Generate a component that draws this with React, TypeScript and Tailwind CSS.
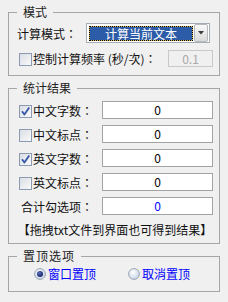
import React from "react";

function Checkbox({ checked }: { checked?: boolean }) {
  return (
    <svg width="13" height="13" viewBox="0 0 13 13" className="shrink-0">
      <defs>
        <linearGradient id="cbg" x1="0" y1="0" x2="1" y2="1">
          <stop offset="0" stopColor="#d8dce2" />
          <stop offset="1" stopColor="#fbfbfb" />
        </linearGradient>
      </defs>
      <rect x="0.5" y="0.5" width="12" height="12" fill="url(#cbg)" stroke="#8c9bb3" />
      {checked && (
        <path d="M3 6.2 L5.4 9.6 L10.2 2.6" fill="none" stroke="#3557a6" strokeWidth="1.8" strokeLinejoin="round" />
      )}
    </svg>
  );
}

function Radio({ checked }: { checked?: boolean }) {
  return (
    <svg width="12" height="12" viewBox="0 0 12 12" className="shrink-0">
      <defs>
        <radialGradient id="rbg" cx="0.4" cy="0.35" r="0.7">
          <stop offset="0" stopColor="#ffffff" />
          <stop offset="1" stopColor="#c3d2e4" />
        </radialGradient>
        <radialGradient id="rdot" cx="0.4" cy="0.35" r="0.7">
          <stop offset="0" stopColor="#5a6fc0" />
          <stop offset="1" stopColor="#101c5a" />
        </radialGradient>
      </defs>
      <circle cx="6" cy="6" r="5.4" fill="url(#rbg)" stroke="#9aa4b4" strokeWidth="1" />
      {checked && <circle cx="6" cy="6" r="3" fill="url(#rdot)" />}
    </svg>
  );
}

function ResultRow({
  label,
  checked,
  value,
  box = true,
  blue,
}: {
  label: string;
  checked?: boolean;
  value: string;
  box?: boolean;
  blue?: boolean;
}) {
  return (
    <div className="flex h-[18px] items-center">
      {box ? (
        <div className="mt-[2px] flex items-center">
          <div className="ml-[2px]">
            <Checkbox checked={checked} />
          </div>
          <span className="ml-[1px] leading-[14px]">{label}</span>
        </div>
      ) : (
        <span className="ml-[4px] mt-[2px] leading-[14px]">{label}</span>
      )}
      <div
        className={`ml-auto flex h-[18px] w-[111px] items-center justify-center border border-[#a3a3a3] bg-white leading-[14px] ${
          blue ? "text-[#0000ff]" : "text-black"
        }`}
      >
        {value}
      </div>
    </div>
  );
}

export default function App() {
  return (
    <div className="h-[302px] w-[228px] overflow-hidden bg-[#f0f0f0] pt-[5px] font-['Noto_Sans_CJK_TC','Noto_Sans_CJK_SC',sans-serif] text-[12px] text-[#111] [text-spacing-trim:space-all]">
      {/* 模式 */}
      <fieldset className="mx-[8px] border border-[#a6a6a6] pb-[8px] pl-[8px] pr-[6px] pt-[4px]">
        <legend className="px-[6px] leading-[14px] text-[#222]">模式</legend>
        <div className="flex h-[20px] items-center">
          <span className="mt-[1px] w-[69px] leading-[14px]">计算模式：</span>
          <div className="flex h-[20px] w-[124px] items-start border border-[#a5acb5] bg-white pl-[2px] pr-[1px]">
            <div className="mt-[2px] h-[15px] w-[104px] bg-[#d9b85c]">
              <div className="flex h-[15px] w-[104px] items-center justify-center border border-dotted border-black bg-[#2c5ba8] bg-clip-padding leading-[13px] text-white">
                计算当前文本
              </div>
            </div>
            <div className="ml-[1px] flex h-[18px] w-[14px] items-center justify-center rounded-[2px] border border-[#b5b8bd] bg-gradient-to-b from-[#fafafa] to-[#dadada]">
              <svg width="6" height="4" viewBox="0 0 6 4">
                <path d="M0 0 H6 L3 3.5 Z" fill="#3a3a3a" />
              </svg>
            </div>
          </div>
        </div>
        <div className="mt-[7px] flex h-[17px] items-center">
          <div className="ml-[2px] mt-[1px]">
            <Checkbox />
          </div>
          <span className="ml-[1px] mt-[1px] leading-[14px]">控制计算频率 (秒/次)：</span>
          <div className="ml-auto flex h-[17px] w-[45px] items-center justify-center border border-[#c9c9c9] leading-[14px] text-[#a8a8a8]">
            0.1
          </div>
        </div>
      </fieldset>

      {/* 统计结果 */}
      <fieldset className="mx-[8px] mt-[5px] border border-[#a6a6a6] pb-[6px] pl-[8px] pr-[6px] pt-[6px]">
        <legend className="px-[6px] leading-[14px] text-[#222]">统计结果</legend>
        <div className="flex flex-col gap-[6px]">
          <ResultRow label="中文字数：" checked value="0" />
          <ResultRow label="中文标点：" value="0" />
          <ResultRow label="英文字数：" checked value="0" />
          <ResultRow label="英文标点：" value="0" />
          <ResultRow label="合计勾选项：" box={false} value="0" blue />
        </div>
        <div className="mt-[8px] text-center leading-[14px]">【拖拽txt文件到界面也可得到结果】</div>
      </fieldset>

      {/* 置顶选项 */}
      <fieldset className="mx-[8px] mt-[5px] border border-[#a6a6a6] pb-[9px] pl-[8px] pr-[6px] pt-[3px]">
        <legend className="px-[6px] leading-[14px] tracking-[1px] text-[#222]">置顶选项</legend>
        <div className="flex h-[16px] items-center text-[#0000ff]">
          <div className="ml-[17px] flex w-[94px] items-center">
            <Radio checked />
            <span className="ml-[2px] leading-[14px]">窗口置顶</span>
          </div>
          <div className="flex items-center">
            <Radio />
            <span className="ml-[2px] leading-[14px]">取消置顶</span>
          </div>
        </div>
      </fieldset>
    </div>
  );
}
